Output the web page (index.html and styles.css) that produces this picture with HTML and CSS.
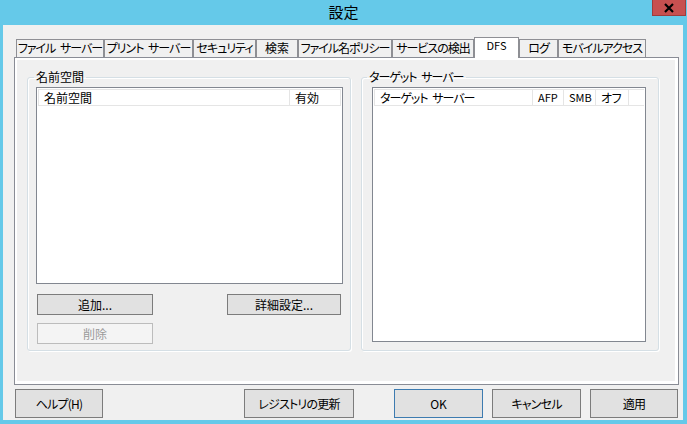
FILE: index.html
```html
<!DOCTYPE html>
<html lang="ja">
<head>
<meta charset="utf-8">
<title>設定</title>
<link rel="stylesheet" href="styles.css">
</head>
<body>
<div class="window">
  <div class="titlebar">
    <span class="spacer"></span>
    <span class="title">設定</span>
    <div class="close">
      <svg width="12" height="10" viewBox="0 0 12 10"><path d="M2 1 L10 9 M10 1 L2 9" stroke="#000" stroke-width="2.2" fill="none"/></svg>
    </div>
  </div>
  <div class="client">
    <div class="tabs">
      <div class="tab t1">ファイル サーバー</div>
      <div class="tab t2">プリント サーバー</div>
      <div class="tab t3">セキュリティ</div>
      <div class="tab t4">検索</div>
      <div class="tab t5">ファイル名ポリシー</div>
      <div class="tab t6">サービスの検出</div>
      <div class="tab t7 active">DFS</div>
      <div class="tab t8">ログ</div>
      <div class="tab t9">モバイルアクセス</div>
    </div>
    <div class="page">
      <div class="page-inner">
        <fieldset class="group group-ns">
          <legend>名前空間</legend>
          <div class="list list-ns">
            <div class="list-head">
              <div class="col c-name">名前空間</div>
              <div class="col c-valid">有効</div>
            </div>
          </div>
          <div class="btn-row">
            <button class="btn btn-add">追加...</button>
            <button class="btn btn-adv">詳細設定...</button>
          </div>
          <button class="btn btn-del" disabled>削除</button>
        </fieldset>
        <fieldset class="group group-target">
          <legend>ターゲット サーバー</legend>
          <div class="list list-target">
            <div class="list-head">
              <div class="col c-target">ターゲット サーバー</div>
              <div class="col c-afp">AFP</div>
              <div class="col c-smb">SMB</div>
              <div class="col c-off">オフ</div>
              <div class="col c-rest"></div>
            </div>
          </div>
        </fieldset>
      </div>
    </div>
    <div class="footer">
      <button class="fbtn f-help">ヘルプ(H)</button>
      <button class="fbtn f-reg">レジストリの更新</button>
      <button class="fbtn f-ok">OK</button>
      <button class="fbtn f-cancel">キャンセル</button>
      <button class="fbtn f-apply">適用</button>
    </div>
  </div>
</div>
</body>
</html>
```
FILE: styles.css
```css
* { box-sizing: border-box; }
html, body { margin: 0; padding: 0; }
body {
  width: 687px;
  height: 424px;
  overflow: hidden;
  font-family: "Noto Sans CJK JP", "Noto Sans", sans-serif;
  font-size: 12px;
  font-feature-settings: "palt";
  color: #000;
}
.window {
  width: 687px;
  height: 424px;
  background: #65c9e9;
  display: flex;
  flex-direction: column;
}
.titlebar {
  height: 25px;
  display: grid;
  grid-template-columns: 1fr auto 1fr;
  align-items: start;
}
.title {
  font-size: 15px;
  line-height: 22px;
  padding-top: 1px;
}
.close {
  justify-self: end;
  width: 34px;
  height: 16px;
  margin-right: 1px;
  background: #c75050;
  border: 1px solid #9e3c3c;
  border-top: none;
  display: flex;
  align-items: center;
  justify-content: center;
}
.client {
  margin: 0 4px 4px 3px;
  flex: 1;
  background: #f0f0f0;
  padding: 12px 4px 0 11px;
  display: flex;
  flex-direction: column;
}
.tabs {
  display: flex;
  align-items: flex-end;
  height: 20px;
  margin-left: 2px;
}
.tab {
  height: 18px;
  border: 1px solid #8e8f94;
  border-bottom: none;
  background: #f0f0f0;
  line-height: 16px;
  text-align: center;
  white-space: nowrap;
  letter-spacing: -1px;
  word-spacing: 3px;
}
.tab.active {
  height: 21px;
  margin-bottom: -1px;
  background: #fff;
  position: relative;
  z-index: 1;
  line-height: 15px;
  font-size: 11px;
  letter-spacing: 0;
}
.t1 { width: 88px; }
.t2 { width: 89px; }
.t3 { width: 63px; }
.t4 { width: 42px; letter-spacing: 0; }
.t5 { width: 94px; }
.t6 { width: 82px; }
.t7 { width: 45px; }
.t8 { width: 39px; }
.t9 { width: 88px; }
.page {
  height: 328px;
  border: 1px solid #898c95;
  background: #fff;
  padding: 2px 3px 3px 2px;
}
.page-inner {
  height: 100%;
  background: #f0f0f0;
  display: grid;
  grid-template-columns: 324px 298px;
  column-gap: 10px;
  align-items: start;
  padding: 10px 0 0 10px;
}
.group {
  margin: 0;
  border: 1px solid #d5dfe5;
  border-radius: 3px;
  box-shadow: inset 1px 1px 0 #fff, 1px 1px 0 #fff;
  min-width: 0;
  height: 281px;
}
.group legend {
  padding: 0 2px;
  line-height: 14px;
}
.group-ns { padding: 3px 0 0 8px; }
.group-ns legend { margin-left: -2px; }
.group-target { padding: 3px 0 0 10px; }
.group-target legend { margin-left: -5px; letter-spacing: -1px; word-spacing: 3px; }
.list {
  background: #fff;
  border: 1px solid #828790;
  padding: 1px;
}
.list-ns { width: 307px; height: 197px; }
.list-target { width: 274px; height: 255px; }
.list-head {
  display: flex;
  height: 17px;
  border: 1px solid #e5e5e5;
  border-right: none;
}
.col {
  height: 15px;
  border-right: 1px solid #e5e5e5;
  line-height: 15px;
  padding-left: 5px;
  white-space: nowrap;
}
.c-name { width: 251px; }
.c-valid { width: 51px; }
.c-target { width: 158px; letter-spacing: -1px; word-spacing: 3px; }
.c-afp { width: 31px; font-size: 11px; }
.c-smb { width: 32px; font-size: 11px; }
.c-off { width: 33px; letter-spacing: -0.5px; }
.c-rest { flex: 1; border-right: none; }
.btn-row {
  display: flex;
  justify-content: space-between;
  width: 304px;
  margin: 10px 0 0 1px;
}
.btn {
  display: block;
  font: inherit;
  color: #000;
  height: 21px;
  padding: 0;
  background: #e1e1e1;
  border: 1px solid #7c7c7c;
  line-height: 17px;
}
.btn-add { width: 116px; }
.btn-adv { width: 114px; }
.btn-del {
  width: 116px;
  margin: 8px 0 0 1px;
  background: #f4f4f4;
  border-color: #bcbcbc;
  color: #9a9a9a;
}
.footer {
  display: flex;
  margin-top: 4px;
}
.fbtn {
  font: inherit;
  color: #000;
  height: 29px;
  padding: 0;
  background: #e1e1e1;
  border: 1px solid #7c7c7c;
  letter-spacing: -0.8px;
}
.f-help { width: 88px; margin-left: 1px; }
.f-reg { width: 110px; margin-left: 141px; }
.f-ok { width: 89px; margin-left: 40px; border-color: #3d7bb0; letter-spacing: 0; }
.f-cancel { width: 89px; margin-left: 9px; }
.f-apply { width: 88px; margin-left: 9px; }
```
